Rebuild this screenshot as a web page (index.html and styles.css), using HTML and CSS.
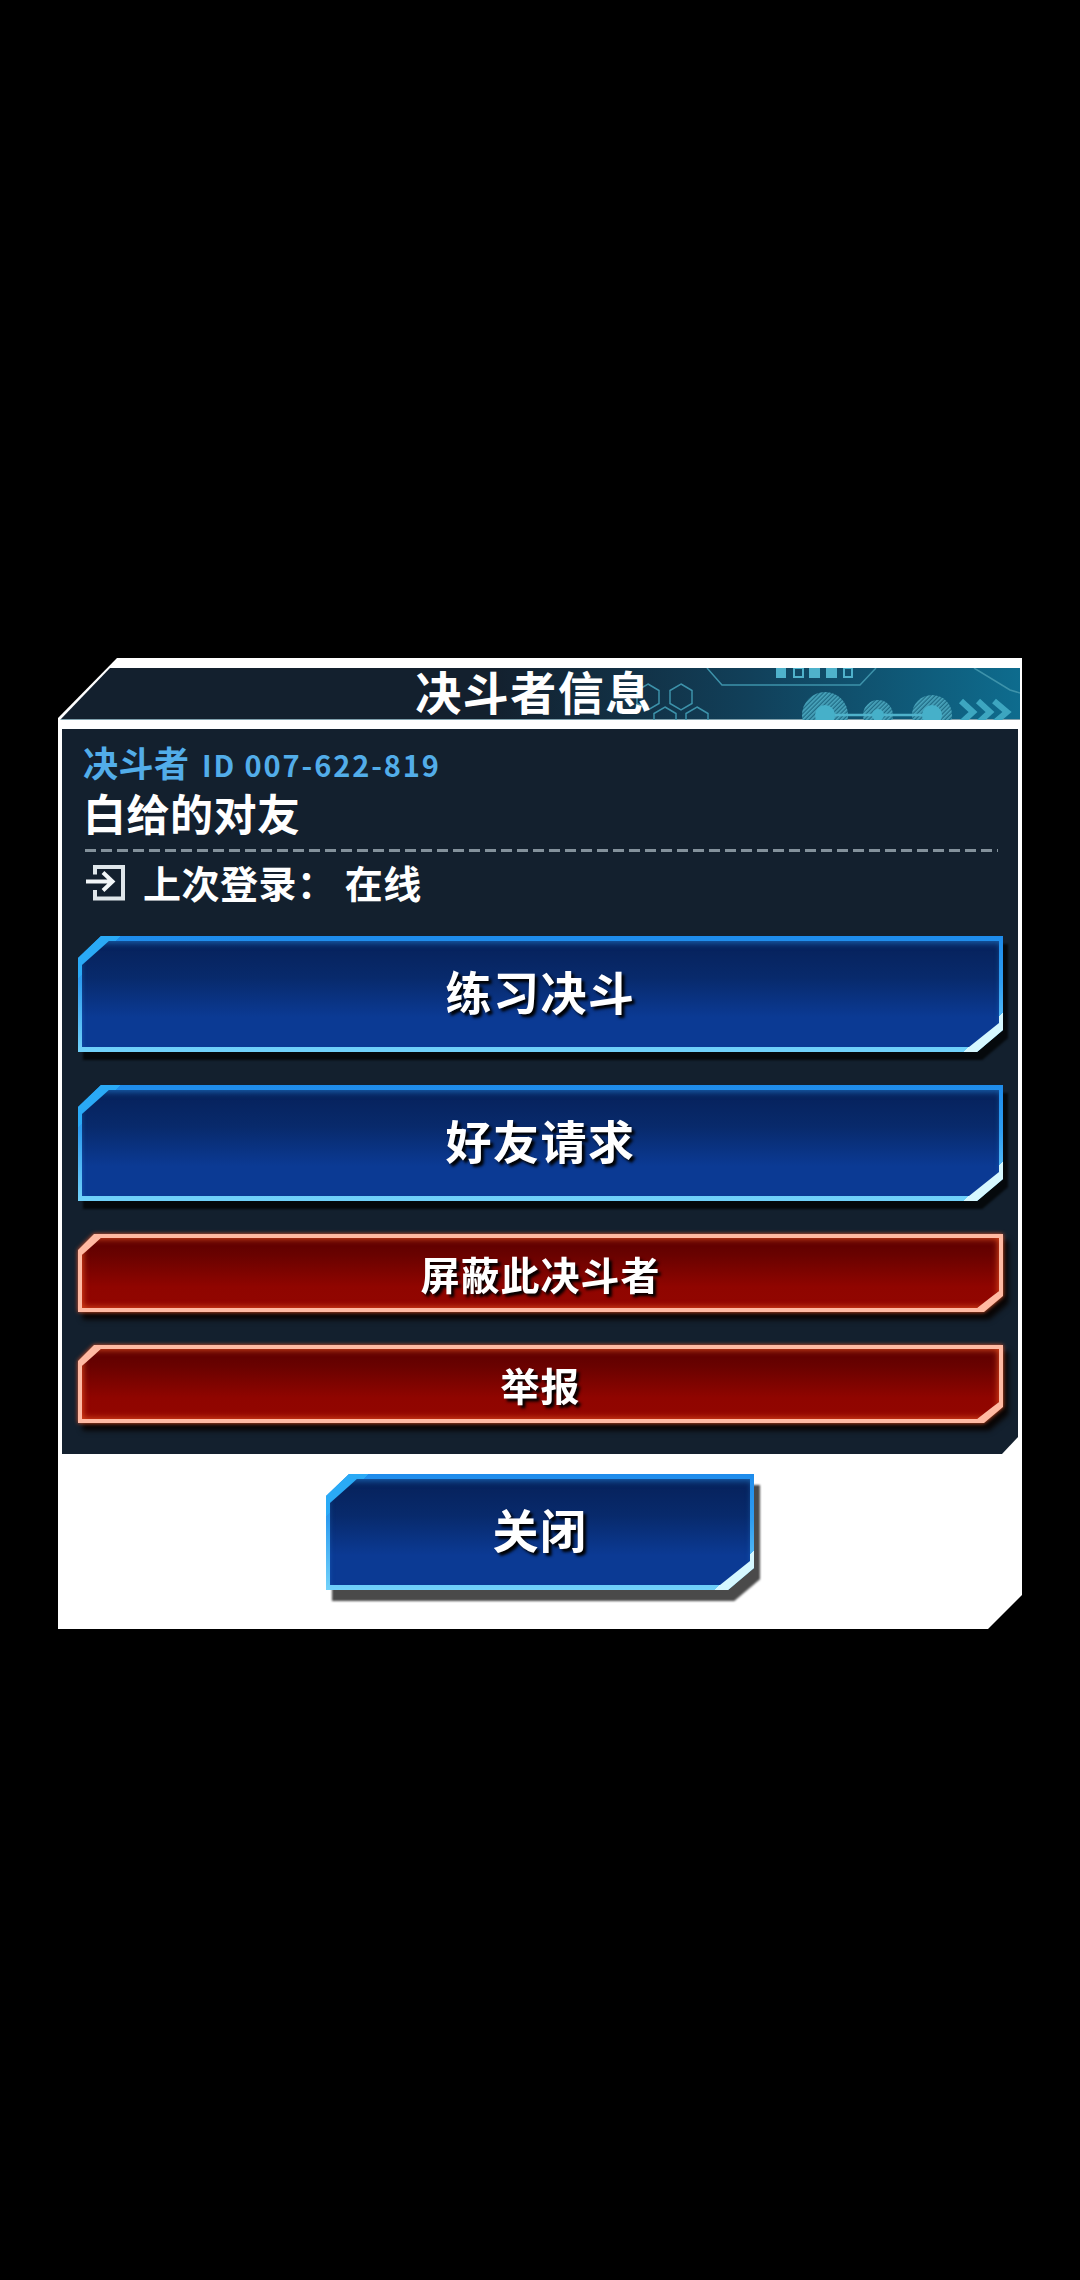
FILE: index.html
```html
<!DOCTYPE html>
<html lang="zh-Hans">
<head>
  <meta charset="UTF-8">
  <meta name="viewport" content="width=device-width, initial-scale=1.0">
  <title>决斗者信息</title>
  <link rel="stylesheet" href="styles.css">
</head>
<body>
  <div class="dialog">
    <div class="dialog-head">
      <svg class="head-art" viewBox="0 0 400 52" width="400" height="52" aria-hidden="true">
        <defs>
          <pattern id="hatch" width="3" height="3" patternUnits="userSpaceOnUse" patternTransform="rotate(45)">
            <rect width="3" height="3" fill="#1f6c86"/>
            <rect width="1.7" height="3" fill="#4aa5bd"/>
          </pattern>
        </defs>
        <g fill="none" stroke="#3d92aa" stroke-width="1.5">
          <path d="M87 0 102 17H240L256 0"/>
          <path d="M354 0 390 22 400 25"/>
          <path d="M28 16 39 22.500V35.500L28 42 17 35.500V22.500Z"/>
          <path d="M61 16 72 22.500V35.500L61 42 50 35.500V22.500Z"/>
          <path d="M45 39 56 45.500V58L34 58V45.500Z"/>
          <path d="M77 39 88 45.500V58L66 58V45.500Z"/>
        </g>
        <g fill="#4fb2cb">
          <rect x="156" y="0" width="10" height="10"/>
          <rect x="189" y="0" width="11" height="10"/>
          <rect x="206" y="0" width="11" height="10"/>
        </g>
        <g fill="none" stroke="#4fb2cb" stroke-width="2">
          <rect x="174" y="0" width="9" height="9"/>
          <rect x="224" y="0" width="8" height="9"/>
        </g>
        <circle cx="205" cy="47" r="23" fill="url(#hatch)"/>
        <circle cx="258" cy="47" r="15" fill="url(#hatch)"/>
        <circle cx="312" cy="47" r="20" fill="url(#hatch)"/>
        <path d="M205 47H312" stroke="#4fb2cb" stroke-width="2.500"/>
        <circle cx="205" cy="47" r="10" fill="#46b0c9"/>
        <circle cx="258" cy="47" r="6" fill="#46b0c9"/>
        <circle cx="312" cy="47" r="10" fill="#46b0c9"/>
        <g fill="none" stroke="#3da6c0" stroke-width="6">
          <path d="M341 33 353 44 341 55"/>
          <path d="M358 33 370 44 358 55"/>
          <path d="M374 33 387 44 374 55"/>
        </g>
      </svg>
      <h1 class="dialog-title">决斗者信息</h1>
    </div>

    <div class="dialog-body">
      <div class="duelist-id">决斗者 <span class="id-code">ID 007-622-819</span></div>
      <div class="duelist-name">白给的对友</div>
      <div class="dash-line"></div>
      <div class="login-row">
        <svg class="login-icon" viewBox="0 0 40 36" width="40" height="36" aria-hidden="true">
          <path d="M9 9.500V2H37V33.500H9V25" fill="none" stroke="#dfe6ea" stroke-width="4"/>
          <path d="M0 16.500H25M17 7.500 26.500 16.500 17 25.500" fill="none" stroke="#f2f6f8" stroke-width="4"/>
        </svg>
        <span>上次登录： 在线</span>
      </div>

      <div class="btn-list">
        <div class="btn btn-blue"><div class="btn-face"><div class="btn-inner">练习决斗</div></div></div>
        <div class="btn btn-blue"><div class="btn-face"><div class="btn-inner">好友请求</div></div></div>
        <div class="btn btn-red"><div class="btn-face"><div class="btn-inner">屏蔽此决斗者</div></div></div>
        <div class="btn btn-red"><div class="btn-face"><div class="btn-inner">举报</div></div></div>
      </div>
    </div>

    <div class="dialog-foot">
      <div class="btn btn-blue btn-close"><div class="btn-face"><div class="btn-inner">关闭</div></div></div>
    </div>
  </div>
</body>
</html>
```

FILE: styles.css
```css
body {
  margin: 0;
  padding-top: 658px;
  height: 1622px;
  overflow: hidden;
  background: #000;
  font-family: "Noto Sans CJK SC", "Noto Sans", sans-serif;
  color: #fff;
}

.dialog {
  width: 964px;
  margin-left: 58px;
  padding-top: 10px;
  background: #fff;
  clip-path: polygon(59px 0, 100% 0, 100% calc(100% - 34px), calc(100% - 34px) 100%, 0 100%, 0 60px);
}

.dialog-head {
  position: relative;
  height: 52px;
  margin: 0 2px;
  background: linear-gradient(90deg, #13202e 0, #13202e 45%, #11405a 72%, #0e6c8e 100%);
  border-bottom: 1px solid #7fa0ac;
  box-sizing: border-box;
  clip-path: polygon(50px 0, 100% 0, 100% 100%, 0 100%, 0 52px);
}

.head-art {
  position: absolute;
  right: 0;
  top: 0;
}

.dialog-title {
  position: relative;
  margin: 0;
  width: 948px;
  text-align: center;
  font-size: 46px;
  line-height: 44px;
  letter-spacing: 1.5px;
  font-weight: 700;
}

.dialog-body {
  margin: 9px 4px 0;
  padding: 14px 15px 31px 16px;
  background: #13202e;
  clip-path: polygon(0 0, 100% 0, 100% calc(100% - 17px), calc(100% - 16px) 100%, 0 100%);
}

.duelist-id {
  height: 38px;
  padding-left: 5px;
  font-size: 35px;
  line-height: 38px;
  font-weight: 700;
  letter-spacing: 0.5px;
  color: #52ade9;
}

.id-code {
  margin-left: 4px;
  font-size: 29px;
  font-weight: 700;
  letter-spacing: 1.9px;
}

.duelist-name {
  height: 46px;
  margin-top: 8px;
  padding-left: 5px;
  font-size: 43px;
  line-height: 46px;
  letter-spacing: 0.5px;
  font-weight: 700;
}

.dash-line {
  height: 3px;
  margin: 14px 5px 0 7px;
  background: repeating-linear-gradient(90deg, #83919b 0, #83919b 11px, transparent 11px, transparent 16px);
}

.login-row {
  display: flex;
  align-items: center;
  gap: 17px;
  height: 40px;
  margin-top: 11px;
  padding-left: 8px;
  font-size: 38px;
  line-height: 40px;
  letter-spacing: 0.5px;
  font-weight: 700;
}

.login-row span {
  margin-top: -2px;
}

.btn-list {
  display: flex;
  flex-direction: column;
  gap: 33px;
  margin-top: 33px;
}

.btn {
  filter: drop-shadow(5px 8px 1px #05090c);
}

.btn-face {
  display: flex;
  height: 100%;
  box-sizing: border-box;
}

.btn-inner {
  flex: 1;
  display: flex;
  align-items: center;
  justify-content: center;
  font-weight: 700;
  text-shadow: 3px 3px 3px #000;
}

.btn-blue {
  height: 116px;
}

.btn-blue .btn-face {
  padding: 5px 4px;
  background:
    linear-gradient(315deg, #d6f8ff 0, #d6f8ff 28px, transparent 28px),
    linear-gradient(135deg, #2aaaf6 0, #2aaaf6 30px, transparent 30px),
    linear-gradient(180deg, #1e8cec 0, #2f9df0 40%, #72d2fa 100%);
  clip-path: polygon(23px 0, 100% 0, 100% calc(100% - 22px), calc(100% - 26px) 100%, 0 100%, 0 22px);
}

.btn-blue .btn-inner {
  padding-bottom: 8px;
  box-sizing: border-box;
  background: linear-gradient(180deg, #06215a 0, #082a6c 35%, #0b3a94 72%, #0b3a94 100%);
  box-shadow: inset 0 4px 6px -2px rgba(40, 150, 240, 0.55);
  font-size: 46px;
  letter-spacing: 1.5px;
  clip-path: polygon(27px 0, 100% 0, 100% calc(100% - 24px), calc(100% - 30px) 100%, 0 100%, 0 24px);
}

.btn-red {
  height: 78px;
  filter: drop-shadow(0 0 2px #e8582c) drop-shadow(5px 7px 2px #080505);
}

.btn-red .btn-face {
  padding: 4px;
  background: #ffb9a2;
  clip-path: polygon(16px 0, 100% 0, 100% calc(100% - 16px), calc(100% - 19px) 100%, 0 100%, 0 16px);
}

.btn-red .btn-inner {
  background: linear-gradient(180deg, #5c0000 0, #6a0200 25%, #900500 70%, #920600 100%);
  box-shadow: inset 0 0 6px 1px #d8481c;
  font-size: 39px;
  letter-spacing: 1px;
  clip-path: polygon(19px 0, 100% 0, 100% calc(100% - 17px), calc(100% - 22px) 100%, 0 100%, 0 17px);
}

.dialog-foot {
  height: 175px;
  padding-top: 20px;
  box-sizing: border-box;
}

.btn-close {
  width: 428px;
  margin: 0 auto;
  filter: drop-shadow(6px 11px 1px #4a4a4a);
}
```
